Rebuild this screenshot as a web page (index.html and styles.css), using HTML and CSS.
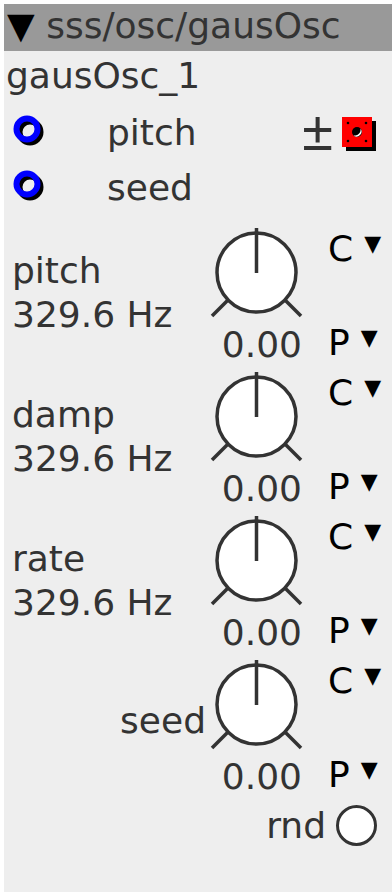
FILE: index.html
```html
<!DOCTYPE html>
<html lang="en">
<head>
    <meta charset="UTF-8">
    <meta name="viewport" content="width=device-width, initial-scale=1.0">
    <title>sss/osc/gausOsc</title>
    <link rel="stylesheet" href="styles.css">
</head>
<body>
    <div class="panel">
        <div class="header"><span class="collapse">▼</span> sss/osc/gausOsc</div>
        <div class="instance">gausOsc_1</div>

        <div class="inlets">
            <div class="inlet">
                <svg class="ring" width="34" height="34" viewBox="0 0 34 34">
                    <circle cx="17" cy="17" r="10.5" fill="none" stroke="#000" stroke-width="6"/>
                    <circle cx="14" cy="14" r="10.5" fill="none" stroke="#0000ff" stroke-width="6"/>
                </svg>
                <span class="inlet-name">pitch</span>
                <div class="inlet-tools">
                    <span class="pm">±</span>
                    <svg class="toggle" width="34" height="34" viewBox="0 0 34 34">
                        <rect x="4" y="4" width="30" height="30" fill="#000"/>
                        <rect x="0" y="0" width="30" height="30" fill="#ff0000"/>
                        <circle cx="6" cy="6" r="1.3" fill="#000"/>
                        <circle cx="24" cy="6" r="1.3" fill="#000"/>
                        <circle cx="6" cy="24" r="1.3" fill="#000"/>
                        <circle cx="24" cy="24" r="1.3" fill="#000"/>
                        <circle cx="15" cy="15" r="5" fill="#000"/>
                        <path d="M18.5 11.5 A5 5 0 0 1 11.5 18.5 A6 6 0 0 0 18.5 11.5 Z" fill="#fff"/>
                    </svg>
                </div>
            </div>
            <div class="inlet">
                <svg class="ring" width="34" height="34" viewBox="0 0 34 34">
                    <circle cx="17" cy="17" r="10.5" fill="none" stroke="#000" stroke-width="6"/>
                    <circle cx="14" cy="14" r="10.5" fill="none" stroke="#0000ff" stroke-width="6"/>
                </svg>
                <span class="inlet-name">seed</span>
            </div>
        </div>

        <div class="param">
            <div class="param-label"><div>pitch</div><div>329.6 Hz</div></div>
            <div class="knob-col">
                <svg class="knob" width="96" height="96" viewBox="0 0 96 96">
                    <line x1="20" y1="74" x2="4" y2="90" stroke="#333" stroke-width="3.5"/>
                    <line x1="77" y1="74" x2="93" y2="90" stroke="#333" stroke-width="3.5"/>
                    <circle cx="48.5" cy="46.5" r="39.5" fill="#fff" stroke="#333" stroke-width="3.5"/>
                    <line x1="48.5" y1="2" x2="48.5" y2="47" stroke="#333" stroke-width="3.5"/>
                </svg>
                <div class="value">0.00</div>
            </div>
            <div class="mode-col">
                <div class="mode">C<span class="caret">▼</span></div>
                <div class="mode mode-p">P<span class="caret">▼</span></div>
            </div>
        </div>

        <div class="param">
            <div class="param-label"><div>damp</div><div>329.6 Hz</div></div>
            <div class="knob-col">
                <svg class="knob" width="96" height="96" viewBox="0 0 96 96">
                    <line x1="20" y1="74" x2="4" y2="90" stroke="#333" stroke-width="3.5"/>
                    <line x1="77" y1="74" x2="93" y2="90" stroke="#333" stroke-width="3.5"/>
                    <circle cx="48.5" cy="46.5" r="39.5" fill="#fff" stroke="#333" stroke-width="3.5"/>
                    <line x1="48.5" y1="2" x2="48.5" y2="47" stroke="#333" stroke-width="3.5"/>
                </svg>
                <div class="value">0.00</div>
            </div>
            <div class="mode-col">
                <div class="mode">C<span class="caret">▼</span></div>
                <div class="mode mode-p">P<span class="caret">▼</span></div>
            </div>
        </div>

        <div class="param">
            <div class="param-label"><div>rate</div><div>329.6 Hz</div></div>
            <div class="knob-col">
                <svg class="knob" width="96" height="96" viewBox="0 0 96 96">
                    <line x1="20" y1="74" x2="4" y2="90" stroke="#333" stroke-width="3.5"/>
                    <line x1="77" y1="74" x2="93" y2="90" stroke="#333" stroke-width="3.5"/>
                    <circle cx="48.5" cy="46.5" r="39.5" fill="#fff" stroke="#333" stroke-width="3.5"/>
                    <line x1="48.5" y1="2" x2="48.5" y2="47" stroke="#333" stroke-width="3.5"/>
                </svg>
                <div class="value">0.00</div>
            </div>
            <div class="mode-col">
                <div class="mode">C<span class="caret">▼</span></div>
                <div class="mode mode-p">P<span class="caret">▼</span></div>
            </div>
        </div>

        <div class="param">
            <div class="param-label param-label-right"><div>seed</div></div>
            <div class="knob-col">
                <svg class="knob" width="96" height="96" viewBox="0 0 96 96">
                    <line x1="20" y1="74" x2="4" y2="90" stroke="#333" stroke-width="3.5"/>
                    <line x1="77" y1="74" x2="93" y2="90" stroke="#333" stroke-width="3.5"/>
                    <circle cx="48.5" cy="46.5" r="39.5" fill="#fff" stroke="#333" stroke-width="3.5"/>
                    <line x1="48.5" y1="2" x2="48.5" y2="47" stroke="#333" stroke-width="3.5"/>
                </svg>
                <div class="value">0.00</div>
            </div>
            <div class="mode-col">
                <div class="mode">C<span class="caret">▼</span></div>
                <div class="mode mode-p">P<span class="caret">▼</span></div>
            </div>
        </div>

        <div class="rnd-row">
            <span class="rnd-label">rnd</span>
            <span class="rnd-button"></span>
        </div>
    </div>
</body>
</html>
```

FILE: styles.css
```css
body {
    margin: 0;
    background: #fff;
    font-family: "DejaVu Sans", sans-serif;
    font-size: 36px;
    color: #333;
}

.panel {
    margin: 4px 0 0 4px;
    height: 888px;
    background: #eee;
    overflow: hidden;
}

.header {
    height: 47px;
    line-height: 43px;
    padding-left: 3px;
    background: #999;
    white-space: nowrap;
}

.collapse {
    color: #000;
}

.instance {
    line-height: 45px;
    margin-top: 2px;
    padding-left: 2px;
}

.inlets {
    margin-top: 7px;
}

.inlet {
    display: flex;
    align-items: center;
    height: 55px;
    line-height: 45px;
}

.ring {
    margin-left: 9px;
    margin-top: -2px;
}

.inlet-name {
    margin-left: 60px;
}

.inlet-tools {
    display: flex;
    align-items: center;
    margin-left: auto;
    padding-right: 16px;
}

.pm {
    font-family: "Liberation Sans", sans-serif;
    font-size: 56px;
    line-height: 45px;
    margin-right: 9px;
    margin-top: -4px;
}

.toggle {
    margin-top: 2px;
}

.param {
    display: grid;
    grid-template-columns: 204px 96px 1fr;
    height: 144px;
}

.inlets + .param {
    margin-top: 11px;
}

.param-label {
    display: flex;
    flex-direction: column;
    justify-content: center;
    padding-left: 8px;
    padding-bottom: 10px;
    line-height: 44px;
}

.param-label-right {
    align-items: flex-end;
    padding-left: 0;
    padding-right: 2px;
    padding-bottom: 18px;
}

.knob {
    display: block;
}

.value {
    line-height: 45px;
    text-align: right;
    padding-right: 2px;
}

.mode-col {
    display: flex;
    flex-direction: column;
    padding-left: 24px;
    padding-bottom: 5px;
    color: #000;
}

.mode {
    line-height: 45px;
    white-space: nowrap;
}

.mode-p {
    margin-top: auto;
}

.caret {
    font-size: 22px;
    line-height: 1;
    margin-left: 11px;
    vertical-align: 10px;
}

.rnd-row {
    display: flex;
    align-items: center;
    justify-content: flex-end;
    height: 46px;
    padding-right: 15px;
}

.rnd-label {
    margin-right: 10px;
    line-height: 45px;
}

.rnd-button {
    width: 35px;
    height: 35px;
    border: 3.5px solid #333;
    border-radius: 50%;
    background: #fff;
}
```
